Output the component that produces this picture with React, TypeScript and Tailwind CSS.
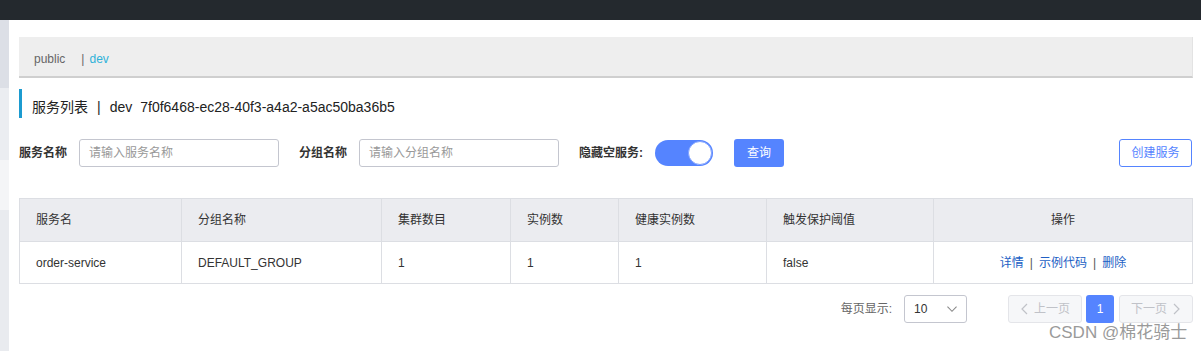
import React from "react";

const font = { fontFamily: '"Liberation Sans", "Noto Sans CJK SC", sans-serif' };

function Chevron({ dir, className }: { dir: "left" | "right" | "down"; className?: string }) {
  const d =
    dir === "left" ? "M7 1 L2 6 L7 11" : dir === "right" ? "M2 1 L7 6 L2 11" : "M1 3 L6 8 L11 3";
  const vb = dir === "down" ? "0 0 12 11" : "0 0 9 12";
  return (
    <svg viewBox={vb} className={className} fill="none" stroke="currentColor" strokeWidth="1.2">
      <path d={d} />
    </svg>
  );
}

export default function App() {
  const cols = [162, 200, 129, 108, 148, 167, 259];
  const headers = ["服务名", "分组名称", "集群数目", "实例数", "健康实例数", "触发保护阈值", "操作"];
  const row = ["order-service", "DEFAULT_GROUP", "1", "1", "1", "false"];
  return (
    <div className="relative w-[1201px] h-[351px] overflow-hidden bg-white text-[#333]" style={font}>
      <div className="h-[20px] bg-[#24292e]" />
      <div className="flex h-[331px]">
        <div className="flex w-[9px] flex-col">
          <div className="h-[68px] bg-[#dcdfe6]" />
          <div className="h-[72px] bg-[#ebedf1]" />
          <div className="h-[50px] bg-[#f4f5f7]" />
          <div className="flex-1 bg-[#e9ebef]" />
        </div>
        <div className="ml-[10px] w-[1174px] flex flex-col">
          {/* namespace bar */}
          <div className="mt-[17px] flex h-[41px] items-center border-b-2 border-r border-[#cfcfcf] border-r-[#e3e3e3] bg-[#eeeeee] px-[15px] pt-[4px] text-[12px]">
            <span className="text-[#666]">public</span>
            <span className="ml-[16px] text-[#666]">|</span>
            <span className="ml-[5px] text-[#2fb2d9]">dev</span>
          </div>
          {/* title */}
          <div className="mt-[11px] flex h-[29px] items-center border-l-[3px] border-[#1c9bd0] pl-[10px] pt-[8px] text-[14px] text-[#222]">
            <span>服务列表</span>
            <span className="ml-[9px] mr-[9px]">|</span>
            <span>dev</span>
            <span className="ml-[8px]">7f0f6468-ec28-40f3-a4a2-a5ac50ba36b5</span>
          </div>
          {/* filters */}
          <div className="mt-[21px] flex h-[28px] items-center text-[12px]">
            <span className="w-[48px] shrink-0 whitespace-nowrap font-bold text-[#333]">服务名称</span>
            <div className="ml-[12px] flex h-[28px] w-[200px] items-center rounded-[3px] border border-[#c4c6cf] px-[9px] text-[#999]">
              请输入服务名称
            </div>
            <span className="ml-[20px] w-[48px] shrink-0 whitespace-nowrap font-bold text-[#333]">分组名称</span>
            <div className="ml-[12px] flex h-[28px] w-[200px] items-center rounded-[3px] border border-[#c4c6cf] px-[9px] text-[#999]">
              请输入分组名称
            </div>
            <span className="ml-[20px] w-[64px] shrink-0 whitespace-nowrap font-bold text-[#333]">隐藏空服务:</span>
            <div className="ml-[12px] flex h-[26px] w-[58px] items-center justify-end rounded-full bg-[#5584ff] p-px">
              <div className="h-[24px] w-[24px] rounded-full border border-[#7fa2ff] bg-white" />
            </div>
            <div className="ml-[21px] flex h-[28px] w-[50px] items-center justify-center rounded-[3px] bg-[#5584ff] text-white">
              查询
            </div>
            <div className="ml-auto mr-px flex h-[28px] w-[73px] items-center justify-center rounded-[3px] border border-[#5584ff] text-[#5584ff]">
              创建服务
            </div>
          </div>
          {/* table */}
          <table className="mt-[31px] w-[1174px] table-fixed border-collapse text-[12px]">
            <colgroup>
              {cols.map((w, i) => (
                <col key={i} style={{ width: w }} />
              ))}
            </colgroup>
            <thead>
              <tr className="h-[43px] bg-[#ebecf0]">
                {headers.map((h, i) => (
                  <th
                    key={i}
                    className={`border border-[#dcdee3] px-[16px] font-normal text-[#333] ${
                      i === 6 ? "text-center" : "text-left"
                    }`}
                  >
                    {h}
                  </th>
                ))}
              </tr>
            </thead>
            <tbody>
              <tr className="h-[42px]">
                {row.map((c, i) => (
                  <td key={i} className="border border-[#dcdee3] px-[16px] text-left text-[#333]">
                    {c}
                  </td>
                ))}
                <td className="border border-[#dcdee3] px-[16px] text-center text-[#2160c4]">
                  <span>详情</span>
                  <span className="mx-[6px] text-[#555]">|</span>
                  <span>示例代码</span>
                  <span className="mx-[6px] text-[#555]">|</span>
                  <span>删除</span>
                </td>
              </tr>
            </tbody>
          </table>
          {/* pagination */}
          <div className="mt-[11px] flex h-[28px] items-center justify-end text-[12px]">
            <span className="text-[#666]">每页显示:</span>
            <div className="ml-[12px] flex h-[28px] w-[63px] items-center justify-between rounded-[3px] border border-[#c4c6cf] pl-[9px] pr-[8px] text-[#333]">
              <span>10</span>
              <Chevron dir="down" className="h-[10px] w-[12px] text-[#888]" />
            </div>
            <div className="ml-[41px] flex h-[28px] w-[74px] items-center justify-center gap-[5px] rounded-[3px] border border-[#e4e5e9] bg-[#f6f7f9] text-[#c0c2c8]">
              <Chevron dir="left" className="h-[12px] w-[9px]" />
              <span>上一页</span>
            </div>
            <div className="ml-[4px] flex h-[28px] w-[28px] items-center justify-center rounded-[3px] bg-[#5584ff] text-white">
              1
            </div>
            <div className="ml-[5px] flex h-[28px] w-[74px] items-center justify-center gap-[5px] rounded-[3px] border border-[#e4e5e9] bg-[#f6f7f9] text-[#c0c2c8]">
              <span>下一页</span>
              <Chevron dir="right" className="h-[12px] w-[9px]" />
            </div>
          </div>
        </div>
      </div>
      <div className="absolute left-[1049px] top-[320px] text-[17px] text-[#9a9a9a]">CSDN @棉花骑士</div>
    </div>
  );
}
